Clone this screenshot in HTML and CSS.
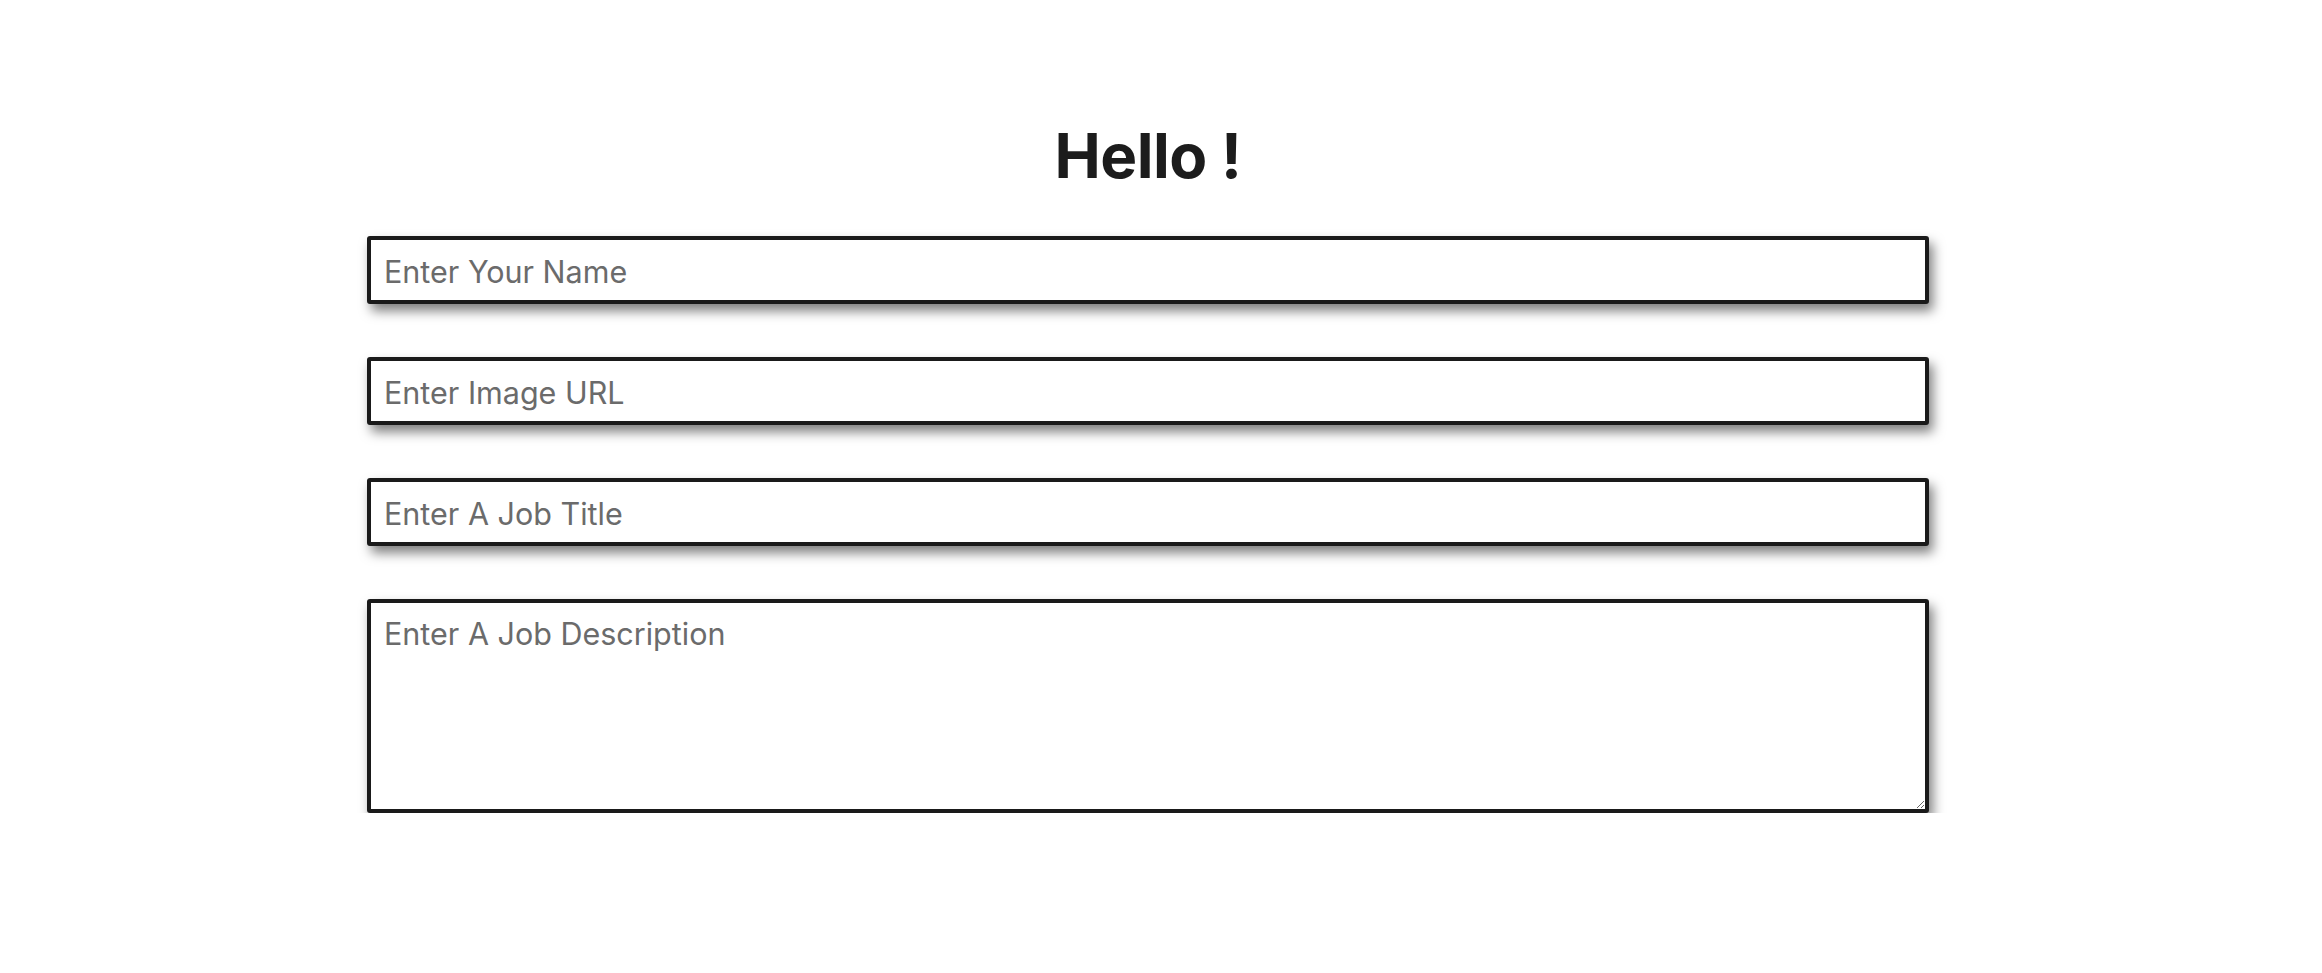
FILE: index.html
```html
<!DOCTYPE html>
<html lang="en">
<head>
<meta charset="utf-8">
<title>Hello</title>
<link rel="stylesheet" href="styles.css">
</head>
<body>
<main class="page">
  <h1 class="title">Hello !</h1>
  <form class="form">
    <input class="field" type="text" placeholder="Enter Your Name">
    <input class="field" type="text" placeholder="Enter Image URL">
    <input class="field" type="text" placeholder="Enter A Job Title">
    <textarea class="field field-area" placeholder="Enter A Job Description"></textarea>
  </form>
</main>
</body>
</html>
```

FILE: styles.css
```css
html, body {
  margin: 0;
  padding: 0;
  background: #ffffff;
}

body {
  font-family: Inter, "Liberation Sans", sans-serif;
  color: #1c1c1c;
}

.page {
  box-sizing: border-box;
  width: 2296px;
  padding-top: 118px;
  display: flex;
  flex-direction: column;
  align-items: center;
}

.title {
  margin: 0;
  font-family: Inter, "Liberation Sans", sans-serif;
  font-weight: 700;
  font-size: 62px;
  line-height: 76px;
  letter-spacing: -0.5px;
  color: #1c1c1c;
}

.form {
  margin-top: 42px;
  width: 1562px;
  display: flex;
  flex-direction: column;
  gap: 53px;
}

.field {
  box-sizing: border-box;
  width: 100%;
  height: 68px;
  margin: 0;
  padding: 2px 13px 0;
  border: 4px solid #1a1a1a;
  border-radius: 3px;
  background: #ffffff;
  font-family: Inter, "Liberation Sans", sans-serif;
  font-size: 30.5px;
  color: #1c1c1c;
  box-shadow: 4px 7px 12px rgba(0, 0, 0, 0.5);
  outline: none;
}

.field::placeholder {
  color: #6b6b6b;
  opacity: 1;
}

.field-area {
  height: 214px;
  padding: 12px 13px;
  line-height: 37px;
  resize: vertical;
  display: block;
}
```
